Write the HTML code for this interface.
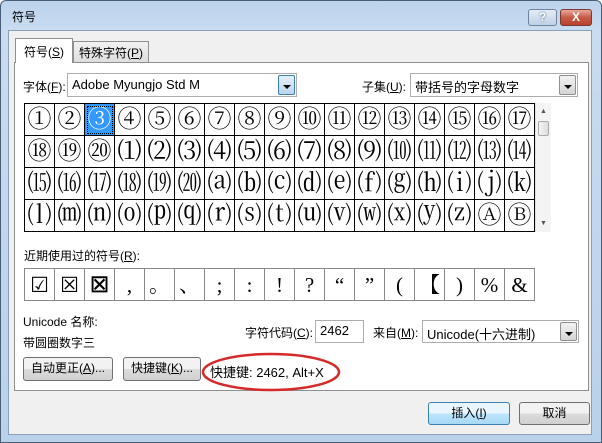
<!DOCTYPE html>
<html><head><meta charset="utf-8"><style>
*{box-sizing:border-box;margin:0;padding:0}
body{width:602px;height:443px;overflow:hidden;background:#fff;font-family:"Liberation Sans","Noto Sans CJK SC",sans-serif;font-size:12px;color:#000;position:relative}
.win{position:absolute;left:0;top:0;width:602px;height:443px;background:linear-gradient(#bcd3ec,#c9dcf0 30px,#b9d1ea);border:1px solid #4a5e78;border-radius:6px 6px 0 0}
.client{position:absolute;left:8px;top:30px;width:584px;height:405px;background:#f0f0f0;border:1px solid #8aa0b8}
.a{position:absolute;white-space:nowrap}
.panel{position:absolute;left:14px;top:62px;width:575px;height:329px;background:#fff;border:1px solid #8e8f8f}
.tab{position:absolute;border:1px solid #8e8f8f;border-bottom:none;text-align:center;padding-top:4px}
.combo{position:absolute;background:#fff;border:1px solid #abadb3;padding:3px 4px;font-size:13px}
.dd{position:absolute;right:1px;top:1px;bottom:1px;width:17px;background:linear-gradient(#f2f2f2,#d5d5d5);border:1px solid #8e8f8f;border-radius:2px}
.dd:after{content:"";position:absolute;left:4px;top:9px;border:4px solid transparent;border-top:4px solid #000}
table{border-collapse:collapse;position:absolute}
td{border:1px solid #000;width:30px;height:32px;text-align:center;font-family:"Liberation Serif","Noto Serif CJK SC",serif;font-size:24px;line-height:30px;padding:0;overflow:hidden}
.r td{border-color:#888;font-size:21px}
.btn{position:absolute;border:1px solid #707070;border-radius:3px;background:linear-gradient(#f2f2f2 50%,#dcdcdc 50%,#d0d0d0);text-align:center;line-height:20px}
u{text-decoration:underline}
</style></head><body>
<div class="win"></div>
<div class="a" style="left:12px;top:8px;font-size:12px">符号</div>
<div class="a" style="left:528px;top:9px;width:29px;height:17px;border:1px solid #6d83a0;border-radius:3px;background:linear-gradient(#e3ecf7,#bfd0e6);text-align:center;color:#fff;font-weight:bold;line-height:15px;text-shadow:0 0 2px #3b5677">?</div>
<div class="a" style="left:560px;top:9px;width:32px;height:17px;border:1px solid #7a3a32;border-radius:3px;background:linear-gradient(#e8a89a,#c75a45 50%,#b8432e);text-align:center;color:#fff;font-weight:bold;line-height:15px">X</div>
<div class="client"></div>
<div class="panel"></div>
<div class="tab" style="left:15px;top:38px;width:58px;height:25px;background:#fff;z-index:2">符号(<u>S</u>)</div>
<div class="tab" style="left:73px;top:41px;width:76px;height:21px;background:linear-gradient(#f2f2f2,#dedede);padding-top:2px">特殊字符(<u>P</u>)</div>
<div class="a" style="left:23px;top:78px">字体(<u>F</u>):</div>
<div class="combo" style="left:67px;top:73px;width:230px;height:24px">Adobe Myungjo Std M<div class="dd" style="background:linear-gradient(#e5f0fb,#bcd5ee);border-color:#3c7fb1"></div></div>
<div class="a" style="left:362px;top:78px">子集(<u>U</u>):</div>
<div class="combo" style="left:410px;top:73px;width:168px;height:24px">带括号的字母数字<div class="dd"></div></div>
<table style="left:24px;top:103px">
<tr><td>①</td><td>②</td><td style="background:#3399ff;color:#fff;outline:1px dotted #000;outline-offset:-3px">③</td><td>④</td><td>⑤</td><td>⑥</td><td>⑦</td><td>⑧</td><td>⑨</td><td>⑩</td><td>⑪</td><td>⑫</td><td>⑬</td><td>⑭</td><td>⑮</td><td>⑯</td><td>⑰</td></tr>
<tr><td>⑱</td><td>⑲</td><td>⑳</td><td>⑴</td><td>⑵</td><td>⑶</td><td>⑷</td><td>⑸</td><td>⑹</td><td>⑺</td><td>⑻</td><td>⑼</td><td>⑽</td><td>⑾</td><td>⑿</td><td>⒀</td><td>⒁</td></tr>
<tr><td>⒂</td><td>⒃</td><td>⒄</td><td>⒅</td><td>⒆</td><td>⒇</td><td>⒜</td><td>⒝</td><td>⒞</td><td>⒟</td><td>⒠</td><td>⒡</td><td>⒢</td><td>⒣</td><td>⒤</td><td>⒥</td><td>⒦</td></tr>
<tr><td>⒧</td><td>⒨</td><td>⒩</td><td>⒪</td><td>⒫</td><td>⒬</td><td>⒭</td><td>⒮</td><td>⒯</td><td>⒰</td><td>⒱</td><td>⒲</td><td>⒳</td><td>⒴</td><td>⒵</td><td>Ⓐ</td><td>Ⓑ</td></tr>
</table>
<div class="a" style="left:535px;top:103px;width:16px;height:129px;background:#f4f4f4;border-left:1px solid #e0e0e0"></div>
<div class="a" style="left:538px;top:121px;width:11px;height:15px;border:1px solid #aaa;border-radius:2px;background:linear-gradient(90deg,#f5f5f5,#ddd)"></div>
<div class="a" style="left:540px;top:108px;font-size:7px;color:#555">▲</div>
<div class="a" style="left:540px;top:220px;font-size:7px;color:#555">▼</div>
<div class="a" style="left:24px;top:247px">近期使用过的符号(<u>R</u>):</div>
<table class="r" style="left:24px;top:268px;border:1px solid #888">
<tr style="height:32px"><td>☑</td><td>☒</td><td style="font-weight:bold">☒</td><td>,</td><td>。</td><td>、</td><td>;</td><td>:</td><td>!</td><td>?</td><td>“</td><td>”</td><td>(</td><td>【</td><td>)</td><td>%</td><td>&amp;</td></tr>
</table>
<div class="a" style="left:23px;top:313px">Unicode 名称:</div>
<div class="a" style="left:23px;top:334px">带圆圈数字三</div>
<div class="a" style="left:245px;top:324px">字符代码(<u>C</u>):</div>
<div class="combo" style="left:315px;top:320px;width:49px;height:23px;padding:2px 4px">2462</div>
<div class="a" style="left:373px;top:324px">来自(<u>M</u>):</div>
<div class="combo" style="left:422px;top:320px;width:157px;height:23px;padding:3px 4px">Unicode(十六进制)<div class="dd"></div></div>
<div class="btn" style="left:23px;top:357px;width:90px;height:24px">自动更正(<u>A</u>)...</div>
<div class="btn" style="left:123px;top:357px;width:78px;height:24px">快捷键(<u>K</u>)...</div>
<div class="a" style="left:210px;top:362px;font-size:13px">快捷键: 2462, Alt+X</div>
<svg class="a" style="left:200px;top:350px" width="142" height="44"><ellipse cx="71" cy="22" rx="68" ry="18" fill="none" stroke="#d62a2a" stroke-width="2.5"/></svg>
<div class="btn" style="left:428px;top:402px;width:82px;height:23px;border-color:#3c7fb1;background:linear-gradient(#eaf6fd 50%,#bee6fd 50%,#a7d9f5)">插入(<u>I</u>)</div>
<div class="btn" style="left:519px;top:402px;width:71px;height:23px">取消</div>
</body></html>
